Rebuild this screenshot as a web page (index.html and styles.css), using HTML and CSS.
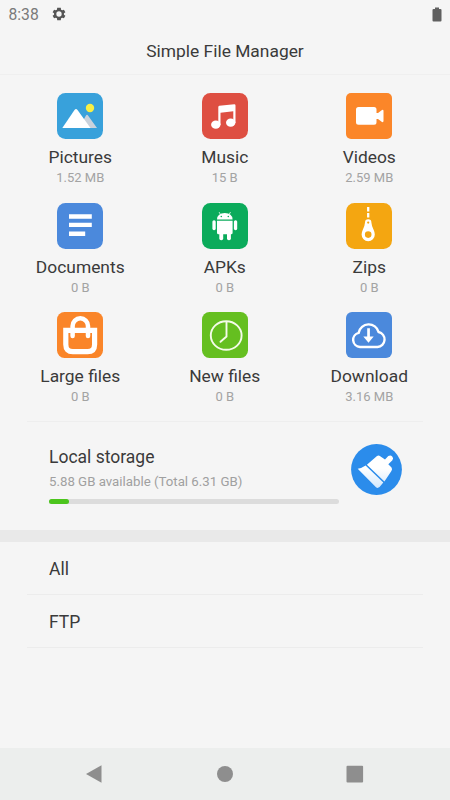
FILE: index.html
```html
<!DOCTYPE html>
<html lang="en">
<head>
<meta charset="utf-8">
<title>Simple File Manager</title>
<link rel="stylesheet" href="styles.css">
</head>
<body>
<div class="status">
  <span class="time">8:38</span>
  <svg class="gear" viewBox="0 0 24 24"><path fill-rule="evenodd" d="M19.4 13a8 8 0 0 0 0-2l2.200-1.700-2.200-3.800-2.600 1a8 8 0 0 0-1.700-1L14.700 2.500H9.300L8.900 5.500a8 8 0 0 0-1.700 1l-2.600-1-2.200 3.800L4.600 11a8 8 0 0 0 0 2l-2.200 1.700 2.200 3.800 2.600-1a8 8 0 0 0 1.700 1l.4 3h5.400l.4-3a8 8 0 0 0 1.700-1l2.600 1 2.200-3.800zM12 16a4 4 0 1 1 0-8 4 4 0 0 1 0 8z"/></svg>
  <svg class="battery" viewBox="0 0 10 15"><path d="M3 0.500h4v1.500h1.500q1 0 1 1V13.500q0 1-1 1h-7q-1 0-1-1V3q0-1 1-1H3z"/></svg>
</div>
<h1 class="title">Simple File Manager</h1>
<main>
  <section class="grid">
    <div class="item">
      <svg class="icon" viewBox="0 0 46 46"><rect width="46" height="46" rx="8.500" fill="#38a1db"/><path d="M27 26l2-3.500q1-1.500 2 0L40 35H26z" fill="#c9d2dc"/><path d="M5.300 35L17.500 17q1.500-2 3 0l13 18z" fill="#fff"/><circle cx="33" cy="15" r="4.200" fill="#f7ef45"/></svg>
      <span class="name">Pictures</span><span class="size">1.52 MB</span>
    </div>
    <div class="item">
      <svg class="icon" viewBox="0 0 46 46"><rect width="46" height="46" rx="8.500" fill="#de4f42"/><g fill="#fff"><ellipse cx="13.800" cy="31.700" rx="4.700" ry="4.100"/><ellipse cx="28.700" cy="29.700" rx="4.700" ry="4.100"/><path d="M16.300 14q0-1 1-1.200l15-1.500q1.200 0 1.200 1.200V30h-2.200V18.200l-12.800 1.500V32h-2.200z"/></g></svg>
      <span class="name">Music</span><span class="size">15 B</span>
    </div>
    <div class="item">
      <svg class="icon" viewBox="0 0 46 46"><rect width="46" height="46" rx="5" fill="#fb8629"/><path d="M12.500 14h15.500q2.500 0 2.500 2.500V20h1.500l4-3q1.500-.6 1.500 1v10q0 1.600-1.500 1l-4-3h-1.500v3.300q0 2.500-2.500 2.500H12.500q-2.500 0-2.500-2.500V16.500q0-2.500 2.500-2.500z" fill="#fff"/></svg>
      <span class="name">Videos</span><span class="size">2.59 MB</span>
    </div>
    <div class="item">
      <svg class="icon" viewBox="0 0 46 46"><rect width="46" height="46" rx="8.500" fill="#4b89dc"/><path d="M12 11.300h22.800v4.400H12zM12 19.700h22.800v4.400H12zM12 28.500h16.200v4.400H12z" fill="#fff"/></svg>
      <span class="name">Documents</span><span class="size">0 B</span>
    </div>
    <div class="item">
      <svg class="icon" viewBox="0 0 46 46"><rect width="46" height="46" rx="8.500" fill="#0bab5b"/><g fill="#fff"><path d="M15 16.500q.3-6.500 7.800-6.500t7.800 6.500zM15 17.700h15.600v12q0 1.500-1.500 1.500h-12.600q-1.500 0-1.500-1.500z"/><rect x="10.400" y="17.200" width="3.300" height="10" rx="1.600"/><rect x="31.900" y="17.200" width="3.300" height="10" rx="1.600"/><rect x="17.300" y="28" width="3.900" height="9.200" rx="1.800"/><rect x="25" y="28" width="3.900" height="9.200" rx="1.800"/></g><path d="M18.500 11.500l-1.400-2.400M27.100 11.500l1.400-2.400" stroke="#fff" stroke-width=".8"/><circle cx="19.300" cy="13.500" r=".8" fill="#0bab5b"/><circle cx="26.300" cy="13.500" r=".8" fill="#0bab5b"/></svg>
      <span class="name">APKs</span><span class="size">0 B</span>
    </div>
    <div class="item">
      <svg class="icon" viewBox="0 0 46 46"><rect width="46" height="46" rx="8.500" fill="#f4a611"/><path d="M22.200 4v4.600M22.200 10v4.500" stroke="#fff" stroke-width="2.300"/><path fill="#fff" fill-rule="evenodd" d="M19 19.500a3.200 3.200 0 0 1 6.400 0q.2 3.500 2.300 7.500 1.100 2.300 1.100 4.600a6.600 6.600 0 0 1-13.200 0q0-2.300 1.100-4.600 2.100-4 2.300-7.500zM22.200 18.500a1.100 1.100 0 1 0 0 2.200 1.100 1.100 0 0 0 0-2.200zM22.200 28.300a3.300 3.300 0 1 0 0 6.600 3.300 3.300 0 0 0 0-6.600z"/></svg>
      <span class="name">Zips</span><span class="size">0 B</span>
    </div>
    <div class="item">
      <svg class="icon" viewBox="0 0 46 46"><rect width="46" height="46" rx="7.500" fill="#fa8529"/><path d="M8.800 18.300h28.800v14.200q0 7.200-7 7.200H15.800q-7 0-7-7.200z" fill="none" stroke="#fff" stroke-width="5.200"/><path d="M15.600 24V14a7.700 7.700 0 0 1 15.400 0v10" fill="none" stroke="#fff" stroke-width="4.500" stroke-linecap="round"/></svg>
      <span class="name">Large files</span><span class="size">0 B</span>
    </div>
    <div class="item">
      <svg class="icon" viewBox="0 0 46 46"><rect width="46" height="46" rx="7.500" fill="#65bf20"/><g fill="none" stroke="#f4fbe9" stroke-width="1.900"><ellipse cx="24.200" cy="23.500" rx="15.400" ry="14.300"/><path d="M24.500 10v14.500l-6 5.300" stroke-linecap="round"/></g></svg>
      <span class="name">New files</span><span class="size">0 B</span>
    </div>
    <div class="item">
      <svg class="icon" viewBox="0 0 46 46"><rect width="46" height="46" rx="6" fill="#4b89dc"/><path d="M14 35a7.200 7.200 0 0 1-1.300-14.200A10.200 10.200 0 0 1 32.600 20 7.600 7.600 0 0 1 31.500 35z" fill="none" stroke="#fff" stroke-width="2.400"/><path d="M21.200 16.300h2.700v8.200h3.800l-5.200 6.300-5.200-6.300h3.900z" fill="#fff"/></svg>
      <span class="name">Download</span><span class="size">3.16 MB</span>
    </div>
  </section>
  <section class="storage">
    <div class="info">
      <div class="label">Local storage</div>
      <div class="avail">5.88 GB available (Total 6.31 GB)</div>
      <div class="bar"><div class="used"></div></div>
    </div>
    <svg class="clean" viewBox="0 0 51 51"><defs><linearGradient id="brush" x1="0" y1="0" x2="0" y2="1"><stop offset=".4" stop-color="#fff"/><stop offset="1" stop-color="#d3e8fc"/></linearGradient></defs><circle cx="25.500" cy="25.500" r="25.400" fill="#2b8ceb"/><path d="M15.900 20.700L26 12.100q1.700-1.200 3.200.2l4.800 3.100 3.300-3.300q2.300-1.400 3.900.4 1.700 1.900.2 3.700l-4.100 4 3.200 3.300q1.200 1.700-.1 3.500L33.400 37.400zM6.700 24.800q4-.4 7.900-3.200L32.300 38.600l-3.800 4.500q-1.800 1.500-3.500.2z" fill="url(#brush)"/></svg>
  </section>
  <div class="band"></div>
  <ul class="list">
    <li>All</li>
    <li>FTP</li>
  </ul>
</main>
<nav class="nav">
  <svg viewBox="0 0 18 18"><path d="M1 9L16.500 0.200v17.600z"/></svg>
  <svg viewBox="0 0 18 18"><circle cx="9" cy="9" r="8"/></svg>
  <svg viewBox="0 0 18 18"><rect x="0.500" y="0.800" width="16.600" height="16.600" rx="1"/></svg>
</nav>
</body>
</html>
```
FILE: styles.css
```css
* { box-sizing: border-box; }
body {
  margin: 0;
  width: 450px;
  height: 800px;
  overflow: hidden;
  display: flex;
  flex-direction: column;
  background: #f5f5f5;
  color: #3a3a3a;
  font-family: Roboto, "Liberation Sans", sans-serif;
}
.status {
  height: 28px;
  display: flex;
  align-items: center;
  padding: 0 8px 0 8.500px;
  color: #7a7a7a;
  font-size: 15.700px;
}
.gear { width: 16px; height: 16px; margin-left: 12px; fill: #555; }
.battery { width: 10px; height: 15px; margin-left: auto; fill: #606060; }
.title {
  margin: 0;
  height: 47px;
  line-height: 46px;
  border-bottom: 1px solid #efefef;
  text-align: center;
  font-size: 17.400px;
  font-weight: 400;
}
main { flex: 1; }
.grid {
  display: grid;
  grid-template-columns: repeat(3, 144.500px);
  grid-auto-rows: 109.500px;
  padding: 18px 0 0 8px;
  height: 346px;
}
.item { display: flex; flex-direction: column; align-items: center; }
.icon { width: 46px; height: 46px; }
.name { margin-top: 7px; font-size: 17.400px; line-height: 22px; }
.size { margin-top: 2px; font-size: 13px; line-height: 16px; color: #a3a3a3; }
.storage {
  margin: 0 27px;
  height: 109px;
  border-top: 1px solid #eee;
  padding: 22px 21px 0 22px;
  display: flex;
  justify-content: space-between;
}
.info { width: 290px; padding-top: 2px; }
.label { font-size: 17.500px; line-height: 22px; }
.avail { margin-top: 6px; font-size: 13.250px; line-height: 16px; color: #a0a0a0; }
.bar { margin-top: 9px; height: 5px; border-radius: 3px; background: #dcdcdc; }
.used { width: 20px; height: 5px; border-radius: 3px; background: #4cc51d; }
.clean { width: 51px; height: 51px; }
.band { height: 12px; background: #e9e9e9; }
.list { list-style: none; margin: 0 27px; padding: 0; }
.list li {
  height: 53px;
  line-height: 54px;
  padding-left: 22px;
  border-bottom: 1px solid #ececec;
  font-size: 17.500px;
}
.nav {
  height: 52px;
  display: flex;
  align-items: center;
  justify-content: space-between;
  padding: 0 86px 0 85px;
  background: #eceeed;
  fill: #8e8e8e;
}
.nav svg { width: 18px; height: 18px; }
```
